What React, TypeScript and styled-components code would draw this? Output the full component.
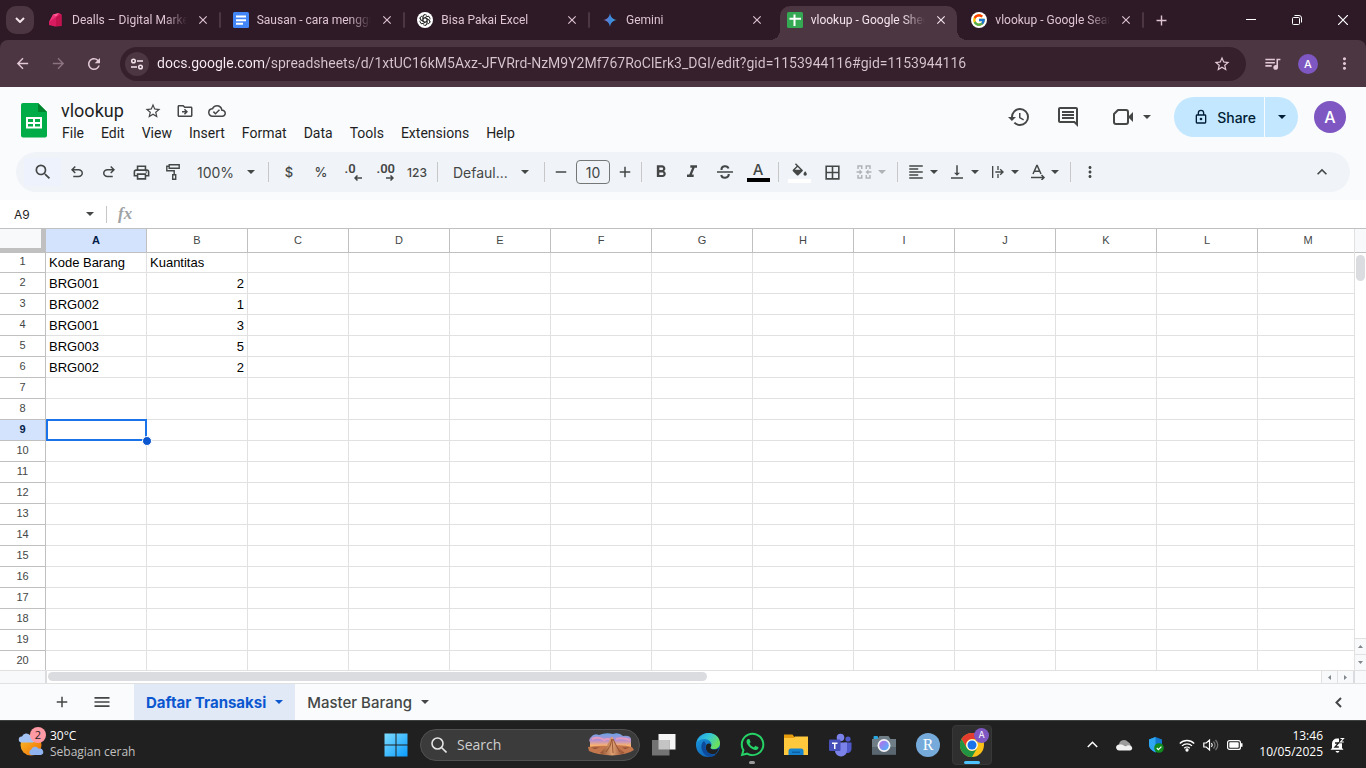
import React from "react";
import styled, { createGlobalStyle, css } from "styled-components";
import {
  MdAdd,
  MdArrowBack,
  MdArrowForward,
  MdBorderAll,
  MdClose,
  MdFormatAlignLeft,
  MdFormatBold,
  MdFormatItalic,
  MdHistory,
  MdKeyboardArrowUp,
  MdMenu,
  MdMoreVert,
  MdOutlineCloudDone,
  MdOutlineDriveFileMove,
  MdOutlineInsertComment,
  MdOutlinePrint,
  MdQueueMusic,
  MdRefresh,
  MdRemove,
  MdSearch,
  MdStarOutline,
  MdVerticalAlignBottom,
} from "react-icons/md";
import { FaWhatsapp } from "react-icons/fa";
import { FcGoogle } from "react-icons/fc";

const systemFont = `"Open Sans", "Noto Sans", sans-serif`;
const browserFont = `Roboto, "Open Sans", sans-serif`;
const appFont = `Inter, Roboto, sans-serif`;
const menuFont = `Roboto, Inter, sans-serif`;
const cellFont = `"Liberation Sans", Arial, sans-serif`;

const GlobalStyle = createGlobalStyle`
  *, *::before, *::after { box-sizing: border-box; }
  body { margin: 0; background: #fff; font-family: ${appFont}; }
  button, input { font: inherit; color: inherit; margin: 0; padding: 0; border: 0; background: none; outline: none; }
  button { cursor: pointer; }
  svg { display: block; flex: none; }
`;

const centered = css`
  display: flex;
  align-items: center;
  justify-content: center;
`;

const Screen = styled.div`
  display: flex;
  flex-direction: column;
  height: 100vh;
  min-height: 480px;
  overflow: hidden;
`;

/* ---------- Browser chrome ---------- */

const TabStrip = styled.div`
  display: flex;
  flex: none;
  height: 40px;
  background: #2e1a26;
  color: #dfc4d2;
  font-family: ${browserFont};
`;

const TabSearch = styled.button`
  ${centered}
  flex: none;
  width: 28px;
  height: 28px;
  margin: 6px 7px 0 6px;
  border-radius: 10px;
  background: #4c3641;
  color: #f3e3eb;
`;

const TabList = styled.div`
  display: flex;
  flex: 0 1 1108px;
  min-width: 0;
`;

const TabSlot = styled.div<{ $divider: boolean }>`
  display: flex;
  flex: 1 1 0;
  min-width: 0;
  padding: 6px 5px 0 0;
  align-items: flex-start;
  &::after {
    content: "";
    flex: none;
    width: 2px;
    height: 16px;
    margin-top: 6px;
    border-radius: 1px;
    background: ${(p) => (p.$divider ? "#4c3641" : "transparent")};
  }
`;

const Tab = styled.div<{ $active: boolean }>`
  position: relative;
  display: flex;
  flex: 1;
  min-width: 0;
  height: ${(p) => (p.$active ? 34 : 28)}px;
  padding: 0 8px ${(p) => (p.$active ? 6 : 0)}px 7px;
  align-items: center;
  gap: 8px;
  border-radius: 10px 10px 0 0;
  background: ${(p) => (p.$active ? "#4c3641" : "transparent")};
  color: ${(p) => (p.$active ? "#f3e3eb" : "#dfc4d2")};
  ${(p) =>
    p.$active &&
    css`
      &::before,
      &::after {
        content: "";
        position: absolute;
        bottom: 0;
        width: 10px;
        height: 10px;
      }
      &::before {
        left: -10px;
        background: radial-gradient(circle at 0 0, transparent 10px, #4c3641 10px);
      }
      &::after {
        right: -10px;
        background: radial-gradient(circle at 100% 0, transparent 10px, #4c3641 10px);
      }
    `}
`;

const TabTitle = styled.span`
  flex: 1;
  min-width: 0;
  overflow: hidden;
  white-space: nowrap;
  font-size: 12px;
  line-height: 18px;
  mask-image: linear-gradient(to right, #000 calc(100% - 22px), transparent);
`;

const PlainButton = styled.button<{ $w?: number; $h?: number }>`
  ${centered}
  flex: none;
  width: ${(p) => p.$w ?? 16}px;
  height: ${(p) => p.$h ?? 16}px;
`;

const WindowControls = styled.div`
  display: flex;
  margin-left: auto;
  color: #fff;
`;

const BrowserFrame = styled.div`
  flex: none;
  background: #2e1a26;
`;

const BrowserBar = styled.div`
  display: flex;
  align-items: center;
  height: 47px;
  padding: 0 4px;
  border-radius: 8px 8px 0 0;
  background: #4c3641;
  color: #e3c8d6;
`;

const AddressBar = styled.label`
  display: flex;
  flex: 1;
  min-width: 0;
  align-items: center;
  height: 34px;
  margin: 0 8px;
  padding: 0 6px 0 5px;
  border-radius: 17px;
  background: #35202c;
`;

const SiteInfo = styled.button`
  ${centered}
  flex: none;
  width: 24px;
  height: 24px;
  margin-right: 8px;
  border-radius: 50%;
  background: #4c3641;
  color: #f3e3eb;
`;

const AddressInput = styled.input`
  flex: 1;
  min-width: 0;
  padding-bottom: 2px;
  font-family: ${browserFont};
  font-size: 14px;
  line-height: 20px;
  color: #dccbd4;
  background: linear-gradient(to right, #fbeef5 107px, #d8c6cf 107px);
  background-clip: text;
  -webkit-text-fill-color: transparent;
`;

const Avatar = styled.button<{ $size: number }>`
  ${centered}
  flex: none;
  width: ${(p) => p.$size}px;
  height: ${(p) => p.$size}px;
  border-radius: 50%;
  background: #7e57c2;
  color: #fff;
  font-family: ${appFont};
  font-size: ${(p) => (p.$size > 24 ? 16 : 11)}px;
  font-weight: 500;
`;

/* ---------- Spreadsheet header ---------- */

const Header = styled.header`
  display: flex;
  flex: none;
  height: 65px;
  padding: 10px 20px 0 21px;
  background: #f9fbfd;
  color: #444746;
`;

const LogoLink = styled.a`
  display: block;
  padding-top: 6px;
`;

const DocInfo = styled.div`
  display: flex;
  flex-direction: column;
  min-width: 0;
  margin-left: 7px;
  padding-top: 2px;
`;

const TitleRow = styled.div`
  display: flex;
  align-items: center;
  height: 23px;
  padding-left: 7px;
`;

const DocTitle = styled.h1`
  margin: 0 13px 0 0;
  font-family: ${menuFont};
  font-size: 18px;
  font-weight: 400;
  line-height: 22px;
  color: #1f1f1f;
`;

const MenuBar = styled.nav`
  display: flex;
  height: 22px;
  gap: 1px;
  font-family: ${menuFont};
`;

const MenuButton = styled.button`
  padding: 0 8px;
  font-size: 14px;
  line-height: 22px;
  color: #1f1f1f;
`;

const HeaderActions = styled.div`
  display: flex;
  align-items: center;
  height: 40px;
  margin-left: auto;
`;

const MeetButton = styled.button`
  display: flex;
  align-items: center;
  gap: 9px;
  height: 40px;
  margin: 0 23px 0 16px;
  padding: 0 0 0 4px;
`;

const ShareGroup = styled.div`
  display: flex;
  gap: 1px;
  margin-right: 16px;
  color: #001d35;
`;

const ShareButton = styled.button`
  display: flex;
  align-items: center;
  gap: 8px;
  height: 40px;
  padding: 0 8px 0 19px;
  border-radius: 20px 0 0 20px;
  background: #c2e7ff;
  font-size: 14px;
  font-weight: 500;
`;

const ShareMenu = styled.button`
  ${centered}
  width: 33px;
  height: 40px;
  border-radius: 0 20px 20px 0;
  background: #c2e7ff;
`;

/* ---------- Toolbar ---------- */

const ToolbarWrap = styled.div`
  flex: none;
  padding: 0 16px 8px;
  background: #f9fbfd;
`;

const Toolbar = styled.div`
  display: flex;
  align-items: center;
  height: 40px;
  padding: 0 12px 0 8px;
  border-radius: 20px;
  background: #f0f4f9;
  color: #444746;
`;

const Tool = styled.button<{ $w?: number; $faded?: boolean }>`
  ${centered}
  flex: none;
  width: ${(p) => p.$w ?? 32}px;
  height: 28px;
  font-size: 13px;
  font-weight: 500;
  color: ${(p) => (p.$faded ? "#b0b3b6" : "inherit")};
`;

const SearchTool = styled(Tool)`
  background: #edf2fc;
`;

const DropTool = styled(Tool)`
  gap: 5px;
  padding-right: 1px;
`;

const TextDrop = styled.button<{ $w: number; $pad: number }>`
  display: flex;
  flex: none;
  align-items: center;
  justify-content: space-between;
  width: ${(p) => p.$w}px;
  height: 28px;
  padding: 0 ${(p) => p.$pad}px;
  font-size: 14px;
`;

const ToolDivider = styled.span`
  flex: none;
  width: 1px;
  height: 20px;
  margin: 0 4px;
  background: #c7c7c7;
`;

const SizeInput = styled.input`
  flex: none;
  width: 34px;
  height: 24px;
  margin: 0 3px;
  border: 1px solid #747775;
  border-radius: 4px;
  text-align: center;
  font-size: 14px;
`;

const DecimalGlyph = styled.span`
  display: flex;
  flex-direction: column;
  align-items: flex-end;
  width: 17px;
  font-family: ${menuFont};
  font-size: 13px;
  font-weight: 600;
  line-height: 12px;
`;

const DecimalText = styled.span`
  align-self: flex-start;
`;

const SwatchGlyph = styled.span<{ $color: string }>`
  display: flex;
  flex-direction: column;
  align-items: center;
  width: 23px;
  border-bottom: 4px solid ${(p) => p.$color};
  font-size: 15px;
  line-height: 16px;
`;

const Caption = styled.span`
  font-size: 12px;
`;

const Spacer = styled.span`
  flex: 1;
`;

/* ---------- Formula bar ---------- */

const FormulaBar = styled.div`
  display: flex;
  flex: none;
  align-items: center;
  height: 28px;
  background: #fff;
  color: #444746;
`;

const NameBox = styled.input`
  width: 72px;
  margin-left: 14px;
  font-size: 12px;
  color: #1f1f1f;
`;

const FormulaDivider = styled.span`
  width: 1px;
  height: 17px;
  margin: 0 11px 0 12px;
  background: #c7c7c7;
`;

const FxMark = styled.span`
  font-family: "Liberation Serif", serif;
  font-size: 17px;
  font-style: italic;
  font-weight: 700;
  line-height: 20px;
  color: #a0a3a6;
`;

const FormulaInput = styled.input`
  flex: 1;
  min-width: 0;
  margin-left: 8px;
  font-size: 13px;
`;

/* ---------- Grid ---------- */

const GridArea = styled.main`
  display: flex;
  flex: 1;
  min-height: 0;
  border-top: 1px solid #c0c0c0;
  border-bottom: 1px solid #e1e1e1;
`;

const GridViewport = styled.div`
  flex: 1;
  min-width: 0;
  overflow: hidden;
`;

const Sheet = styled.table`
  width: 1359px;
  min-width: 100%;
  table-layout: fixed;
  border-spacing: 0;
  font-family: ${cellFont};
`;

const ColumnHead = styled.th<{ $selected?: boolean }>`
  width: 101px;
  height: 24px;
  padding: 0 0 2px;
  border-right: 1px solid #c0c0c0;
  border-bottom: 1px solid #c0c0c0;
  background: ${(p) => (p.$selected ? "#d3e3fd" : "#fff")};
  color: ${(p) => (p.$selected ? "#041e49" : "#444746")};
  font-size: 11px;
  font-weight: ${(p) => (p.$selected ? 700 : 400)};
  line-height: 20px;
`;

const CornerHead = styled.td`
  width: 46px;
  height: 24px;
  padding: 0;
  border-right: 5px solid #c0c0c0;
  border-bottom: 5px solid #c0c0c0;
  background: #f8f9fa;
`;

const Row = styled.tr`
  height: 21px;
  &:first-child {
    height: 20px;
  }
`;

const RowHead = styled.th<{ $selected: boolean }>`
  padding: 0 0 2px;
  border-right: 1px solid #c0c0c0;
  border-bottom: 1px solid #c0c0c0;
  background: ${(p) => (p.$selected ? "#d3e3fd" : "#fff")};
  color: ${(p) => (p.$selected ? "#041e49" : "#444746")};
  font-size: 11px;
  font-weight: ${(p) => (p.$selected ? 700 : 400)};
  line-height: 17px;
`;

const Cell = styled.td<{ $selected?: boolean; $numeric?: boolean }>`
  position: relative;
  padding: 0 3px;
  border-right: 1px solid #e1e1e1;
  border-bottom: 1px solid #e1e1e1;
  font-size: 13px;
  line-height: 18px;
  white-space: nowrap;
  vertical-align: bottom;
  text-align: ${(p) => (p.$numeric ? "right" : "left")};
  color: #000;
  ${(p) =>
    p.$selected &&
    css`
      &::before {
        content: "";
        position: absolute;
        z-index: 1;
        inset: -1px -1px -1px 0;
        border: 2px solid #1a73e8;
      }
      &::after {
        content: "";
        position: absolute;
        z-index: 2;
        right: -6px;
        bottom: -6px;
        width: 10px;
        height: 10px;
        border: 1px solid #fff;
        border-radius: 50%;
        background: #0b57d0;
      }
    `}
`;

const VerticalScroll = styled.div`
  display: flex;
  flex: none;
  flex-direction: column;
  width: 12px;
  border-left: 1px solid #e1e1e1;
  background: #fff;
`;

const ScrollHead = styled.div`
  height: 24px;
  border-bottom: 1px solid #c0c0c0;
  background: #f8f9fa;
`;

const VerticalThumb = styled.div`
  width: 9px;
  height: 26px;
  margin: 2px 1px auto;
  border-radius: 5px;
  background: #dadce0;
`;

const ScrollStep = styled.button<{ $vertical?: boolean }>`
  ${centered}
  flex: none;
  width: ${(p) => (p.$vertical ? 11 : 16)}px;
  height: ${(p) => (p.$vertical ? 16 : 12)}px;
  border-top: ${(p) => (p.$vertical ? "1px solid #e1e1e1" : "0")};
  border-left: ${(p) => (p.$vertical ? "0" : "1px solid #e1e1e1")};
  background: #f8f9fa;
  color: #80868b;
`;

const HorizontalScroll = styled.div`
  display: flex;
  flex: none;
  align-items: flex-start;
  height: 13px;
  border-bottom: 1px solid #e1e1e1;
  background: #fff;
`;

const LeftCorner = styled.span`
  flex: none;
  width: 47px;
  height: 12px;
  border-right: 2px solid #dadce0;
  background: #f8f9fa;
`;

const RightCorner = styled.span`
  flex: none;
  width: 13px;
  height: 12px;
  border-left: 2px solid #dadce0;
  background: #f8f9fa;
`;

const HorizontalTrack = styled.div`
  flex: 1;
  padding: 1px 5px 0 1px;
`;

const HorizontalThumb = styled.div`
  width: 52%;
  height: 9px;
  border-radius: 5px;
  background: #dadce0;
`;

/* ---------- Sheet tabs ---------- */

const SheetBar = styled.div`
  display: flex;
  flex: none;
  align-items: center;
  height: 36px;
  padding: 0 12px 0 42px;
  background: #f9fbfd;
  color: #444746;
`;

const SheetTabs = styled.div`
  display: flex;
  margin-left: 12px;
`;

const SheetTab = styled.button<{ $active?: boolean }>`
  display: flex;
  align-items: center;
  gap: 9px;
  height: 36px;
  padding: 0 12px;
  background: ${(p) => (p.$active ? "#e1e9f7" : "transparent")};
  color: ${(p) => (p.$active ? "#0b57d0" : "#444746")};
  font-size: 15px;
  font-weight: ${(p) => (p.$active ? 700 : 500)};
`;

/* ---------- Taskbar ---------- */

const Taskbar = styled.footer`
  display: grid;
  flex: none;
  grid-template-columns: 1fr auto 1fr;
  height: 48px;
  border-top: 1px solid #3c403e;
  background: #202020;
  color: #fff;
  font-family: ${systemFont};
  font-size: 12px;
  line-height: 16px;
`;

const Weather = styled.button`
  display: flex;
  align-items: center;
  gap: 4px;
  padding-left: 18px;
  text-align: left;
`;

const WeatherIcon = styled.span`
  position: relative;
`;

const Badge = styled.span`
  ${centered}
  position: absolute;
  top: -4px;
  right: 0;
  width: 16px;
  height: 16px;
  border-radius: 50%;
  background: #ff99a4;
  color: #1f1f1f;
  font-size: 11px;
`;

const Lines = styled.span`
  display: flex;
  flex-direction: column;
  padding-bottom: 1px;
`;

const Muted = styled.span`
  color: #c0c0c0;
`;

const Dock = styled.div`
  display: flex;
  align-items: center;
  padding-left: 2px;
`;

const DockButton = styled.button<{ $active?: boolean }>`
  ${centered}
  position: relative;
  width: 40px;
  height: 40px;
  margin: 0 2px;
  border-radius: 4px;
  border: 1px solid ${(p) => (p.$active ? "#383838" : "transparent")};
  background: ${(p) => (p.$active ? "#2f2f2f" : "transparent")};
`;

const Indicator = styled.span<{ $active?: boolean }>`
  position: absolute;
  bottom: 0;
  width: ${(p) => (p.$active ? 16 : 6)}px;
  height: 3px;
  border-radius: 2px;
  background: ${(p) => (p.$active ? "#4cc2ff" : "#9a9a9a")};
`;

const TaskSearch = styled.label`
  display: flex;
  align-items: center;
  gap: 10px;
  width: 220px;
  height: 32px;
  margin: 0 2px;
  padding: 0 5px 0 10px;
  border: 1px solid #515151;
  border-radius: 16px;
  background: #3b3b3b;
`;

const TaskSearchInput = styled.input`
  flex: 1;
  min-width: 0;
  font-size: 14px;
  &::placeholder {
    color: #cfcfcf;
    opacity: 1;
  }
`;

const Tray = styled.div`
  display: flex;
  align-items: center;
  justify-content: flex-end;
  padding-right: 20px;
`;

const Clock = styled.time`
  display: flex;
  flex-direction: column;
  margin: 0 7px 0 9px;
  padding-bottom: 1px;
  text-align: right;
`;

/* ---------- Drawings ---------- */

const Caret = () => (
  <svg width="8" height="4" viewBox="0 0 8 4" fill="currentColor">
    <path d="M0 0h8L4 4z" />
  </svg>
);

const StepArrow = ({ turn }: { turn: number }) => (
  <svg width="7" height="7" viewBox="0 0 7 7" fill="currentColor">
    <path d="M3.5 2 6 5H1z" transform={`rotate(${turn} 3.5 3.5)`} />
  </svg>
);

const Glyph = ({ d, size = 20 }: { d: string; size?: number }) => (
  <svg width={size} height={size} viewBox="0 0 24 24" fill="currentColor">
    <path d={d} />
  </svg>
);

const paths = {
  undo: "M7 19v-2h7.1q1.575 0 2.738-1T18 13.5t-1.162-2.5T14.1 10H7.8l2.6 2.6L9 14 4 9l5-5 1.4 1.4L7.8 8h6.3q2.425 0 4.163 1.575T20 13.5t-1.737 3.925T14.1 19z",
  redo: "M9.9 19q-2.425 0-4.163-1.575T4 13.5t1.737-3.925T9.9 8h6.3l-2.6-2.6L15 4l5 5-5 5-1.4-1.4 2.6-2.6H9.9q-1.575 0-2.738 1T6 13.5 7.162 16 9.900 17H17v2z",
  merge: "M3 3h7v5H8V5H5v3H3zm11 0h7v5h-2V5h-3v3h-2zM3 16h2v3h3v-3h2v5H3zm11 0h2v3h3v-3h2v5h-7zM2 11h4V8.500l4 3.500-4 3.500V13H2zm20 0v2h-4v2.500L14 12l4-3.500V11z",
  wrap: "M3 3h2v18H3zm8 0h2v6h-2zm0 12h2v6h-2zm-3-4h9l-2.500-2.500L16 7l5 5-5 5-1.500-1.500L17 13H8z",
  lock: "M18 8h-1V6A5 5 0 0 0 7 6v2H6a2 2 0 0 0-2 2v10a2 2 0 0 0 2 2h12a2 2 0 0 0 2-2V10a2 2 0 0 0-2-2zM9 6a3 3 0 0 1 6 0v2H9zm9 14H6V10h12zm-6-3a2 2 0 1 0 0-4 2 2 0 0 0 0 4z",
  bucket: "M16.500 11.200 7 1.700 5.600 3.100l2.400 2.400-5.300 5.300a1.600 1.600 0 0 0 0 2.200l5.600 5.600a1.600 1.600 0 0 0 2.200 0l6-6a1 1 0 0 0 0-1.400zM5.500 11 9.400 7l4 4zM20 13s-2.400 2.600-2.400 4.100a2.400 2.400 0 0 0 4.800 0C22.400 15.600 20 13 20 13z",
};

const PaintIcon = () => (
  <svg width="14" height="18" viewBox="0 0 14 18" fill="none" stroke="currentColor" strokeWidth="1.400">
    <path d="M3.200 1.700h10v3.600h-10zM3.200 3.300H.8v4.500h7.400v3.700M6.700 11.700h3v4.600h-3z" />
  </svg>
);

const StrikeIcon = () => (
  <svg width="16" height="16" viewBox="0 0 16 16" fill="none" stroke="currentColor" strokeWidth="2">
    <path d="M0 8h16" strokeWidth="1.500" />
    <path d="M4.500 6C4 1.500 10.500 1 11.500 4.500M4.200 11c.8 4 7.600 3.500 7.600-1" />
  </svg>
);

const VideoIcon = () => (
  <svg width="22" height="18" viewBox="0 0 22 18">
    <path d="M6 2h8q2 0 2 2v10q0 2-2 2H4q-2 0-2-2V6z" fill="none" stroke="currentColor" strokeWidth="2" strokeLinejoin="round" />
    <path d="m17 8 4-4v10l-4-4z" fill="currentColor" />
  </svg>
);

const RotateIcon = () => (
  <svg width="15" height="16" viewBox="0 0 15 16" fill="none" stroke="currentColor">
    <path d="M2 10 5.800 1.500h.4L10 10M3.300 7.300h5.400" strokeWidth="1.500" />
    <path d="M0 13.500h13M10.500 11l2.500 2.500-2.500 2.500" strokeWidth="1.500" />
  </svg>
);

const DecimalArrow = ({ back }: { back?: boolean }) => (
  <svg width="8" height="6" viewBox="0 0 8 6" fill="none" stroke="currentColor" strokeWidth="1.500">
    <path d={back ? "M8 3H1.500M3.500.5 1 3l2.500 2.500" : "M0 3h6.500M4.500.5 7 3 4.500 5.500"} />
  </svg>
);

const SheetsLogo = () => (
  <svg width="26" height="35" viewBox="0 0 26 35">
    <path d="M2 0h15l9 9v23.500a2 2 0 0 1-2 2H2a2 2 0 0 1-2-2V2a2 2 0 0 1 2-2z" fill="#00ac47" />
    <path d="M17 0l9 9h-9z" fill="#00832d" />
    <path d="M5 14h16v11.500H5zm2 2v3h5v-3zm7 0v3h5v-3zm-7 5v2.500h5V21zm7 0v2.500h5V21z" fill="#fff" fillRule="evenodd" />
  </svg>
);

const GemIcon = () => (
  <svg width="16" height="16" viewBox="0 0 16 16">
    <path d="m5 2.500 6-1.500 2.500 1.500V14L7 14.500 1 13V10z" fill="#d81b60" />
    <path d="m5 2.500 6-1.500-3 4z" fill="#ff5c93" />
    <path d="m8 5 5.500-2.500V14L8 14z" fill="#c2134f" />
    <path d="M5 2.500 8 5 1 10z" fill="#f0337a" />
  </svg>
);

const DocsFavicon = () => (
  <svg width="16" height="16" viewBox="0 0 16 16">
    <rect width="16" height="16" rx="1.500" fill="#4285f4" />
    <path d="M3 3.500h10v2H3zm0 3.700h10v2H3zm0 3.600h7v2H3z" fill="#fff" />
  </svg>
);

const SheetsFavicon = () => (
  <svg width="16" height="16" viewBox="0 0 16 16">
    <rect width="16" height="16" rx="1.500" fill="#34a853" />
    <path d="M6.500 2.500h2v3.300H14v2H8.500V14h-2V7.800H2.500v-2h4z" fill="#fff" />
  </svg>
);

const KnotFavicon = () => (
  <svg width="16" height="16" viewBox="0 0 16 16">
    <circle cx="8" cy="8" r="8" fill="#fff" />
    <g fill="none" stroke="#222" strokeWidth=".8">
      {[0, 60, 120, 180, 240, 300].map((turn) => (
        <path key={turn} d="M6 9.200V4.800a2.200 2.200 0 0 1 4-1.200M6 6.800l3.800-2.200a2.200 2.200 0 0 1 3 .8" transform={`rotate(${turn} 8 8)`} />
      ))}
    </g>
  </svg>
);

const GeminiFavicon = () => (
  <svg width="16" height="16" viewBox="0 0 16 16">
    <defs>
      <linearGradient id="spark" x1="0" y1="0" x2="1" y2="0">
        <stop offset="0" stopColor="#9177c7" />
        <stop offset=".5" stopColor="#3c86dd" />
        <stop offset="1" stopColor="#3fa9e0" />
      </linearGradient>
    </defs>
    <path d="M8 1c.6 4 2.600 6.300 6.800 7C10.600 8.700 8.600 11 8 15 7.400 11 5.400 8.700 1.200 8 5.400 7.300 7.400 5 8 1z" fill="url(#spark)" />
  </svg>
);

const GoogleFavicon = () => (
  <svg width="16" height="16" viewBox="0 0 16 16">
    <circle cx="8" cy="8" r="8" fill="#fff" />
    <FcGoogle x="1" y="1" size={14} />
  </svg>
);

const TuneIcon = () => (
  <svg width="14" height="14" viewBox="0 0 14 14" fill="none" stroke="currentColor" strokeWidth="1.500">
    <circle cx="3.500" cy="4" r="1.800" />
    <path d="M7 4h6M1 10h6" />
    <circle cx="10.500" cy="10" r="1.800" />
  </svg>
);

const WeatherDrawing = () => (
  <svg width="28" height="28" viewBox="0 0 28 28">
    <defs>
      <linearGradient id="sun" x1="0" y1="0" x2="1" y2="1">
        <stop offset="0" stopColor="#fbc02d" />
        <stop offset="1" stopColor="#ef6c00" />
      </linearGradient>
    </defs>
    <circle cx="13" cy="14" r="10.500" fill="url(#sun)" />
    <path d="M3.500 11.500a3 3 0 0 1 .5-6 4.500 4.500 0 0 1 8-1 3.500 3.500 0 0 1 3 7z" fill="#a4c3f5" />
    <path d="M13 24a3 3 0 0 1 .2-5.500 4.200 4.200 0 0 1 7.500-.8A3.200 3.200 0 0 1 23 24z" fill="#8fb4f0" />
  </svg>
);

const WindowsLogo = () => (
  <svg width="24" height="24" viewBox="0 0 24 24">
    <defs>
      <linearGradient id="win" x1="0" y1="0" x2="1" y2="1">
        <stop offset="0" stopColor="#7ddcff" />
        <stop offset="1" stopColor="#0a9bff" />
      </linearGradient>
    </defs>
    <path d="M.5.5h11v11H.5zm12 0h11v11h-11zm-12 12h11v11H.5zm12 0h11v11h-11z" fill="url(#win)" />
  </svg>
);

const DesertDrawing = () => (
  <svg width="46" height="24" viewBox="0 0 46 24">
    <defs>
      <linearGradient id="dusk" x1="0" y1="0" x2="0" y2="1">
        <stop offset="0" stopColor="#6aa5e8" />
        <stop offset=".45" stopColor="#b48fd0" />
        <stop offset=".8" stopColor="#ffb46b" />
      </linearGradient>
      <linearGradient id="rock" x1="0" y1="0" x2="1" y2="0">
        <stop offset="0" stopColor="#8a4a2b" />
        <stop offset=".5" stopColor="#e0a273" />
        <stop offset="1" stopColor="#8c452a" />
      </linearGradient>
    </defs>
    <path d="M3 4q3-4 8-2 7-3 14-1 6-2 10 2 9-1 8 5v8H2V9q-2-2 1-5z" fill="url(#dusk)" />
    <path d="M4 6q7-3 12 1 4-2 7 0M28 6q6-2 14 1" stroke="#e29ac0" strokeWidth="2" fill="none" />
    <path d="M0 14q12-2 22-1 12-2 22 1l2 3q-7 5-22 5T1 18z" fill="#c4774c" />
    <path d="M3 14.500h9l-5 1.500zm31 0h8l-5 1.500z" fill="#8a4a33" />
    <path d="m12 20 7-7 4-9h1.500l4 9 8 7q-13 5-24.500 0z" fill="url(#rock)" />
    <path d="m24 6-2 7-4 6m6-13 1 14m0-14 4 8 3 5" stroke="#8a4327" strokeWidth=".8" fill="none" />
  </svg>
);

const TaskViewIcon = () => (
  <svg width="24" height="24" viewBox="0 0 24 24">
    <path d="M6.500 1h17v15.500h-17z" fill="#f4f4f4" />
    <path d="M0 7h17.500v15.500H0z" fill="#737373" />
    <path d="M6.500 7h11v9.500h-11z" fill="#c4c4c4" />
  </svg>
);

const EdgeIcon = () => (
  <svg width="24" height="24" viewBox="0 0 24 24">
    <defs>
      <linearGradient id="edgeTop" x1="0" y1="0" x2="1" y2=".5">
        <stop offset="0" stopColor="#2499e8" />
        <stop offset=".5" stopColor="#33c6d8" />
        <stop offset="1" stopColor="#6be05c" />
      </linearGradient>
      <linearGradient id="edgeBase" x1="0" y1="0" x2="1" y2="1">
        <stop offset="0" stopColor="#1b9de2" />
        <stop offset="1" stopColor="#0c51a8" />
      </linearGradient>
    </defs>
    <circle cx="12" cy="12" r="12" fill="url(#edgeBase)" />
    <path d="M1 8C4 1 10 0 13 0c7 0 11 5.500 11 10 0 4-3 6-6 6-4 0-4-1.500-3-2.500C17 10 13 6 8.500 6 5 6 2 7 .4 10z" fill="url(#edgeTop)" />
    <path d="M14.800 13.800c-1 1.200 0 3 3.600 2.800 2 0 3.600-.8 4.600-1.900-.5 2-2.200 5-4 6.300-6 1-10.500-3-9-8 .5-1.800 2-2.600 3.200-2.400 2 .3 2.500 2 1.600 3.200z" fill="#202020" />
    <path d="M8 8c-4 3-4 11 4 15.500 3 .8 6-.3 7.500-1.500C13 22 8 17 10 11z" fill="#0d4a9c" />
  </svg>
);

const FolderIcon = () => (
  <svg width="24" height="24" viewBox="0 0 24 24">
    <path d="M0 1.500h8.500l2 2.500H24v4H0z" fill="#e59b0c" />
    <path d="M0 5h10l1-1.500h13V22H0z" fill="#ffc83d" />
    <path d="M4.500 22v-4a2.500 2.500 0 0 1 2.500-2.500h10a2.500 2.500 0 0 1 2.500 2.500v4z" fill="#1683cf" />
    <path d="M8 18.500h8v1.500H8z" fill="#0f5fa6" />
  </svg>
);

const TeamsIcon = () => (
  <svg width="24" height="24" viewBox="0 0 24 24">
    <circle cx="20" cy="6" r="2.600" fill="#5059c9" />
    <circle cx="12.500" cy="4.500" r="3.800" fill="#7b83eb" />
    <path d="M16 9.500h7.500v6.500a4 4 0 0 1-6 3.400z" fill="#5059c9" />
    <path d="M7 9.500h12v8a6 6 0 0 1-12 0z" fill="#7b83eb" />
    <rect x="1" y="6.500" width="11.500" height="11.500" rx="1" fill="#4650b8" />
    <path d="M4 9.500h5.500v1.500H7.500v5H6v-5H4z" fill="#fff" />
  </svg>
);

const CameraIcon = () => (
  <svg width="24" height="24" viewBox="0 0 24 24">
    <defs>
      <linearGradient id="lens" x1="0" y1="0" x2="1" y2="1">
        <stop offset="0" stopColor="#c069e6" />
        <stop offset="1" stopColor="#43b8ff" />
      </linearGradient>
    </defs>
    <rect x="1.500" y="3" width="4.500" height="4" rx="1" fill="#2aa8e0" />
    <path d="M7.500 3h9l2 3H24v15.500H0V6h5.500z" fill="#6f7d87" />
    <path d="M0 14h24v7.500H0z" fill="#5a6771" />
    <circle cx="12" cy="12.500" r="6.500" fill="#f1f3f5" />
    <circle cx="12" cy="12.500" r="4.800" fill="url(#lens)" />
  </svg>
);

const RMark = styled.span`
  ${centered}
  width: 24px;
  height: 24px;
  border-radius: 50%;
  background: #75aadb;
  color: #fff;
  font-family: "Liberation Serif", serif;
  font-size: 16px;
`;

const ChromeIcon = () => (
  <svg width="24" height="24" viewBox="0 0 24 24">
    <circle cx="12" cy="12" r="12" fill="#fbc116" />
    <path d="M1.600 6A12 12 0 0 1 22.400 6H12a6 6 0 0 0-5.200 9z" fill="#e33b2e" />
    <path d="M1.600 6l5.200 9A6 6 0 0 0 17.200 15L12 24A12 12 0 0 1 1.600 6z" fill="#229342" />
    <circle cx="12" cy="12" r="5.800" fill="#fff" />
    <circle cx="12" cy="12" r="4.500" fill="#1a73e8" />
  </svg>
);

const ProfileBadge = styled.span`
  ${centered}
  position: absolute;
  top: 2px;
  right: 2px;
  width: 15px;
  height: 15px;
  border-radius: 50%;
  background: #7e57c2;
  font-family: ${appFont};
  font-size: 9px;
`;

const CloudIcon = () => (
  <svg width="17" height="12" viewBox="0 0 17 12">
    <path d="M3 5.500A5 5 0 0 1 12 3q2.500 1 3 5z" fill="#9c9c9c" />
    <path d="M3.500 11.500A3 3 0 0 1 1.500 6Q4 4.500 7 6l3 1.200Q12 5.500 14 6.500q2.500 1 2.200 3-.4 2-2.200 2z" fill="#f0f0f0" />
  </svg>
);

const ShieldIcon = () => (
  <svg width="16" height="16" viewBox="0 0 16 16">
    <path d="M7.500 0 14 2.500V8q0 4-6.500 7.500Q1 12 1 8V2.500z" fill="#1278cf" />
    <path d="M7.500 0v15.500Q1 12 1 8V2.500z" fill="#2fa6f0" />
    <circle cx="11" cy="11" r="4.800" fill="#0f8a1c" />
    <path d="m8.800 11 1.600 1.600 3-3" stroke="#fff" strokeWidth="1.200" fill="none" />
  </svg>
);

const WifiIcon = () => (
  <svg width="16" height="14" viewBox="0 0 16 14" fill="none" stroke="#fff" strokeWidth="1.300">
    <path d="M.8 5.500a10.200 10.200 0 0 1 14.400 0M3 7.900a7 7 0 0 1 10 0M5.200 10.200a4 4 0 0 1 5.600 0" />
    <circle cx="8" cy="12" r="1" fill="#fff" />
  </svg>
);

const SoundIcon = () => (
  <svg width="16" height="14" viewBox="0 0 16 14" fill="none" stroke="#fff" strokeWidth="1.200">
    <path d="M.8 5h2.400L6.500 2v10L3.200 9H.8zM8.500 5q1.500 2 0 4" />
    <path d="M10.500 3.500q3 3.500 0 7M12.500 2q4.500 5 0 10" stroke="#777" />
  </svg>
);

const BatteryIcon = () => (
  <svg width="16" height="10" viewBox="0 0 16 10">
    <rect x=".6" y=".6" width="12.800" height="8.800" rx="2" fill="none" stroke="#fff" strokeWidth="1.200" />
    <rect x="2.300" y="2.300" width="9.400" height="5.400" rx=".8" fill="#fff" />
    <path d="M14 3.300h1.500v3.400H14z" fill="#fff" />
  </svg>
);

const BellIcon = () => (
  <svg width="16" height="16" viewBox="0 0 16 16">
    <path d="M2 6.500a5 5 0 0 1 5-5h2v4h3V11l1.500 1.800H.5L2 11z" fill="#fff" />
    <path d="M5.500 14h4q-.6 1.700-2 1.700t-2-1.700z" fill="#fff" />
    <path d="M5 6h3.500l-3.500 4h3.800" stroke="#202020" strokeWidth="1.300" fill="none" />
    <path d="M10.500 1.500h3l-3 3.500h3.300" stroke="#202020" strokeWidth="2.600" fill="none" />
    <path d="M10.500 1.500h3l-3 3.500h3.300" stroke="#fff" strokeWidth="1.100" fill="none" />
  </svg>
);

/* ---------- Data ---------- */

const tabs = [
  { title: "Dealls – Digital Marketing", icon: <GemIcon />, divider: true },
  { title: "Sausan - cara menggunakan", icon: <DocsFavicon />, divider: true },
  { title: "Bisa Pakai Excel", icon: <KnotFavicon />, divider: true },
  { title: "Gemini", icon: <GeminiFavicon />, divider: false },
  { title: "vlookup - Google Sheets", icon: <SheetsFavicon />, divider: false, active: true },
  { title: "vlookup - Google Search", icon: <GoogleFavicon />, divider: true },
];

const menus = ["File", "Edit", "View", "Insert", "Format", "Data", "Tools", "Extensions", "Help"];
const columns = "ABCDEFGHIJKLM".split("");
const rowNumbers = Array.from({ length: 20 }, (_, i) => i + 1);

const records: Record<number, [string, string]> = {
  1: ["Kode Barang", "Kuantitas"],
  2: ["BRG001", "2"],
  3: ["BRG002", "1"],
  4: ["BRG001", "3"],
  5: ["BRG003", "5"],
  6: ["BRG002", "2"],
};

const cellText = (row: number, column: number) => (column < 2 ? records[row]?.[column] : undefined);

/* ---------- Page ---------- */

function Browser() {
  return (
    <>
      <TabStrip>
        <TabSearch aria-label="Search tabs">
          <svg width="10" height="6" viewBox="0 0 10 6" fill="none" stroke="currentColor" strokeWidth="2">
            <path d="m1 1 4 4 4-4" />
          </svg>
        </TabSearch>
        <TabList>
          {tabs.map((tab) => (
            <TabSlot key={tab.title} $divider={tab.divider}>
              <Tab $active={!!tab.active}>
                {tab.icon}
                <TabTitle>{tab.title}</TabTitle>
                <PlainButton aria-label="Close tab">
                  <MdClose size={14} />
                </PlainButton>
              </Tab>
            </TabSlot>
          ))}
        </TabList>
        <PlainButton $w={24} $h={40} aria-label="New tab">
          <MdAdd size={17} />
        </PlainButton>
        <WindowControls>
          <PlainButton $w={46} $h={40} aria-label="Minimize">
            <svg width="10" height="10" viewBox="0 0 10 10" stroke="currentColor">
              <path d="M0 4.500h10" />
            </svg>
          </PlainButton>
          <PlainButton $w={46} $h={40} aria-label="Restore">
            <svg width="10" height="10" viewBox="0 0 10 10" fill="none" stroke="currentColor">
              <rect x=".5" y="2.500" width="7" height="7" rx="1" />
              <path d="M2.500.5H7A2.500 2.500 0 0 1 9.500 3v4.500" />
            </svg>
          </PlainButton>
          <PlainButton $w={46} $h={40} aria-label="Close window">
            <svg width="10" height="10" viewBox="0 0 10 10" stroke="currentColor" strokeWidth="1.200">
              <path d="m0 0 10 10M10 0 0 10" />
            </svg>
          </PlainButton>
        </WindowControls>
      </TabStrip>
      <BrowserFrame>
        <BrowserBar>
          <PlainButton $w={36} $h={34} aria-label="Back">
            <MdArrowBack size={17} />
          </PlainButton>
          <PlainButton $w={36} $h={34} aria-label="Forward" disabled>
            <MdArrowForward size={17} color="#8c7380" />
          </PlainButton>
          <PlainButton $w={36} $h={34} aria-label="Reload">
            <MdRefresh size={18} />
          </PlainButton>
          <AddressBar>
            <SiteInfo aria-label="Site information">
              <TuneIcon />
            </SiteInfo>
            <AddressInput
              aria-label="Address"
              defaultValue="docs.google.com/spreadsheets/d/1xtUC16kM5Axz-JFVRrd-NzM9Y2Mf767RoClErk3_DGI/edit?gid=1153944116#gid=1153944116"
            />
            <PlainButton $w={36} $h={34} aria-label="Bookmark">
              <MdStarOutline size={18} />
            </PlainButton>
          </AddressBar>
          <PlainButton $w={36} $h={34} aria-label="Media controls">
            <MdQueueMusic size={19} />
          </PlainButton>
          <PlainButton as="span" $w={36} $h={34}>
            <Avatar $size={20}>A</Avatar>
          </PlainButton>
          <PlainButton $w={36} $h={34} aria-label="Browser menu">
            <MdMoreVert size={19} />
          </PlainButton>
        </BrowserBar>
      </BrowserFrame>
    </>
  );
}

function SheetHeader() {
  return (
    <Header>
      <LogoLink href="#" aria-label="Sheets home">
        <SheetsLogo />
      </LogoLink>
      <DocInfo>
        <TitleRow>
          <DocTitle>vlookup</DocTitle>
          <PlainButton $w={32} $h={24} aria-label="Star">
            <MdStarOutline size={18} />
          </PlainButton>
          <PlainButton $w={32} $h={24} aria-label="Move">
            <MdOutlineDriveFileMove size={18} />
          </PlainButton>
          <PlainButton $w={32} $h={24} aria-label="Saved to Drive">
            <MdOutlineCloudDone size={18} />
          </PlainButton>
        </TitleRow>
        <MenuBar>
          {menus.map((menu) => (
            <MenuButton key={menu}>{menu}</MenuButton>
          ))}
        </MenuBar>
      </DocInfo>
      <HeaderActions>
        <PlainButton $w={49} $h={40} aria-label="Version history">
          <MdHistory size={24} />
        </PlainButton>
        <PlainButton $w={49} $h={40} aria-label="Comments">
          <MdOutlineInsertComment size={24} />
        </PlainButton>
        <MeetButton aria-label="Join a call">
          <VideoIcon />
          <Caret />
        </MeetButton>
        <ShareGroup>
          <ShareButton>
            <Glyph d={paths.lock} size={16} />
            Share
          </ShareButton>
          <ShareMenu aria-label="Sharing options">
            <Caret />
          </ShareMenu>
        </ShareGroup>
        <Avatar $size={32}>A</Avatar>
      </HeaderActions>
    </Header>
  );
}

function FormatToolbar() {
  return (
    <ToolbarWrap>
      <Toolbar role="toolbar">
        <SearchTool $w={37} aria-label="Search menus"><MdSearch size={20} /></SearchTool>
        <Tool aria-label="Undo"><Glyph d={paths.undo} size={18} /></Tool>
        <Tool aria-label="Redo"><Glyph d={paths.redo} size={18} /></Tool>
        <Tool aria-label="Print"><MdOutlinePrint size={19} /></Tool>
        <Tool $w={31} aria-label="Paint format"><PaintIcon /></Tool>
        <TextDrop $w={76} $pad={9}>100%<Caret /></TextDrop>
        <ToolDivider />
        <Tool>$</Tool>
        <Tool>%</Tool>
        <Tool aria-label="Decrease decimals">
          <DecimalGlyph><DecimalText>.0</DecimalText><DecimalArrow back /></DecimalGlyph>
        </Tool>
        <Tool aria-label="Increase decimals">
          <DecimalGlyph><DecimalText>.00</DecimalText><DecimalArrow /></DecimalGlyph>
        </Tool>
        <Tool><Caption>123</Caption></Tool>
        <ToolDivider />
        <TextDrop $w={98} $pad={11}>Defaul...<Caret /></TextDrop>
        <ToolDivider />
        <Tool $w={24} aria-label="Smaller"><MdRemove size={18} /></Tool>
        <SizeInput aria-label="Font size" defaultValue="10" />
        <Tool $w={24} aria-label="Larger"><MdAdd size={18} /></Tool>
        <ToolDivider />
        <Tool $w={30} aria-label="Bold"><MdFormatBold size={20} /></Tool>
        <Tool aria-label="Italic"><MdFormatItalic size={20} /></Tool>
        <Tool $w={34} aria-label="Strikethrough"><StrikeIcon /></Tool>
        <Tool aria-label="Text color"><SwatchGlyph $color="#000">A</SwatchGlyph></Tool>
        <ToolDivider />
        <Tool aria-label="Fill color">
          <SwatchGlyph $color="#fff"><Glyph d={paths.bucket} size={17} /></SwatchGlyph>
        </Tool>
        <Tool $w={34} aria-label="Borders"><MdBorderAll size={19} /></Tool>
        <DropTool $w={44} $faded aria-label="Merge cells"><Glyph d={paths.merge} size={18} /><Caret /></DropTool>
        <ToolDivider />
        <DropTool $w={41} aria-label="Horizontal align"><MdFormatAlignLeft size={18} /><Caret /></DropTool>
        <DropTool $w={41} aria-label="Vertical align"><MdVerticalAlignBottom size={18} /><Caret /></DropTool>
        <DropTool $w={41} aria-label="Text wrapping"><Glyph d={paths.wrap} size={16} /><Caret /></DropTool>
        <DropTool $w={41} aria-label="Text rotation"><RotateIcon /><Caret /></DropTool>
        <ToolDivider />
        <Tool $w={30} aria-label="More"><MdMoreVert size={18} /></Tool>
        <Spacer />
        <Tool aria-label="Hide menus"><MdKeyboardArrowUp size={20} /></Tool>
      </Toolbar>
    </ToolbarWrap>
  );
}

function Grid() {
  return (
    <GridArea>
      <GridViewport>
        <Sheet>
          <thead>
            <tr>
              <CornerHead />
              {columns.map((name) => (
                <ColumnHead key={name} scope="col" $selected={name === "A"}>{name}</ColumnHead>
              ))}
            </tr>
          </thead>
          <tbody>
            {rowNumbers.map((row) => (
              <Row key={row}>
                <RowHead scope="row" $selected={row === 9}>{row}</RowHead>
                {columns.map((name, index) => (
                  <Cell key={name} $selected={row === 9 && index === 0} $numeric={index === 1 && row > 1}>
                    {cellText(row, index)}
                  </Cell>
                ))}
              </Row>
            ))}
          </tbody>
        </Sheet>
      </GridViewport>
      <VerticalScroll>
        <ScrollHead />
        <VerticalThumb />
        <ScrollStep $vertical aria-label="Scroll up"><StepArrow turn={0} /></ScrollStep>
        <ScrollStep $vertical aria-label="Scroll down"><StepArrow turn={180} /></ScrollStep>
      </VerticalScroll>
    </GridArea>
  );
}

function WindowsTaskbar() {
  return (
    <Taskbar>
      <Weather>
        <WeatherIcon>
          <WeatherDrawing />
          <Badge>2</Badge>
        </WeatherIcon>
        <Lines>
          <span>30°C</span>
          <Muted>Sebagian cerah</Muted>
        </Lines>
      </Weather>
      <Dock>
        <DockButton aria-label="Start"><WindowsLogo /></DockButton>
        <TaskSearch>
          <svg width="16" height="16" viewBox="0 0 16 16" fill="none" stroke="#e4e4e4" strokeWidth="1.600">
            <circle cx="6.500" cy="6.500" r="5.500" />
            <path d="m10.500 10.500 5 5" />
          </svg>
          <TaskSearchInput aria-label="Search" placeholder="Search" />
          <DesertDrawing />
        </TaskSearch>
        <DockButton aria-label="Task view"><TaskViewIcon /></DockButton>
        <DockButton aria-label="Edge"><EdgeIcon /></DockButton>
        <DockButton aria-label="WhatsApp"><FaWhatsapp size={27} color="#25d366" /><Indicator /></DockButton>
        <DockButton aria-label="File Explorer"><FolderIcon /></DockButton>
        <DockButton aria-label="Teams"><TeamsIcon /></DockButton>
        <DockButton aria-label="Camera"><CameraIcon /></DockButton>
        <DockButton><RMark>R</RMark></DockButton>
        <DockButton $active aria-label="Chrome">
          <ChromeIcon />
          <ProfileBadge>A</ProfileBadge>
          <Indicator $active />
        </DockButton>
      </Dock>
      <Tray>
        <PlainButton $w={32} $h={40} aria-label="Show hidden icons">
          <svg width="11" height="7" viewBox="0 0 11 7" fill="none" stroke="#fff" strokeWidth="1.500">
            <path d="m.8 6 4.700-4.700L10.200 6" />
          </svg>
        </PlainButton>
        <PlainButton $w={32} $h={40} aria-label="OneDrive"><CloudIcon /></PlainButton>
        <PlainButton $w={32} $h={40} aria-label="Security"><ShieldIcon /></PlainButton>
        <PlainButton $w={30} $h={40} aria-label="Network"><WifiIcon /></PlainButton>
        <PlainButton $w={18} $h={40} aria-label="Volume"><SoundIcon /></PlainButton>
        <PlainButton $w={30} $h={40} aria-label="Battery"><BatteryIcon /></PlainButton>
        <Clock>
          <span>13:46</span>
          <span>10/05/2025</span>
        </Clock>
        <PlainButton aria-label="Notifications"><BellIcon /></PlainButton>
      </Tray>
    </Taskbar>
  );
}

export default function App() {
  return (
    <Screen>
      <GlobalStyle />
      <Browser />
      <SheetHeader />
      <FormatToolbar />
      <FormulaBar>
        <NameBox aria-label="Name box" defaultValue="A9" />
        <Caret />
        <FormulaDivider />
        <FxMark>fx</FxMark>
        <FormulaInput aria-label="Formula" />
      </FormulaBar>
      <Grid />
      <HorizontalScroll>
        <LeftCorner />
        <HorizontalTrack>
          <HorizontalThumb />
        </HorizontalTrack>
        <ScrollStep aria-label="Scroll left"><StepArrow turn={-90} /></ScrollStep>
        <ScrollStep aria-label="Scroll right"><StepArrow turn={90} /></ScrollStep>
        <RightCorner />
      </HorizontalScroll>
      <SheetBar>
        <PlainButton $w={40} $h={36} aria-label="Add sheet"><MdAdd size={18} /></PlainButton>
        <PlainButton $w={40} $h={36} aria-label="All sheets"><MdMenu size={20} /></PlainButton>
        <SheetTabs>
          <SheetTab $active>Daftar Transaksi<Caret /></SheetTab>
          <SheetTab>Master Barang<Caret /></SheetTab>
        </SheetTabs>
        <Spacer />
        <PlainButton $w={32} $h={36} aria-label="Show side panel">
          <svg width="7" height="11" viewBox="0 0 7 11" fill="none" stroke="currentColor" strokeWidth="2">
            <path d="M6 1 1.500 5.500 6 10" />
          </svg>
        </PlainButton>
      </SheetBar>
      <WindowsTaskbar />
    </Screen>
  );
}
